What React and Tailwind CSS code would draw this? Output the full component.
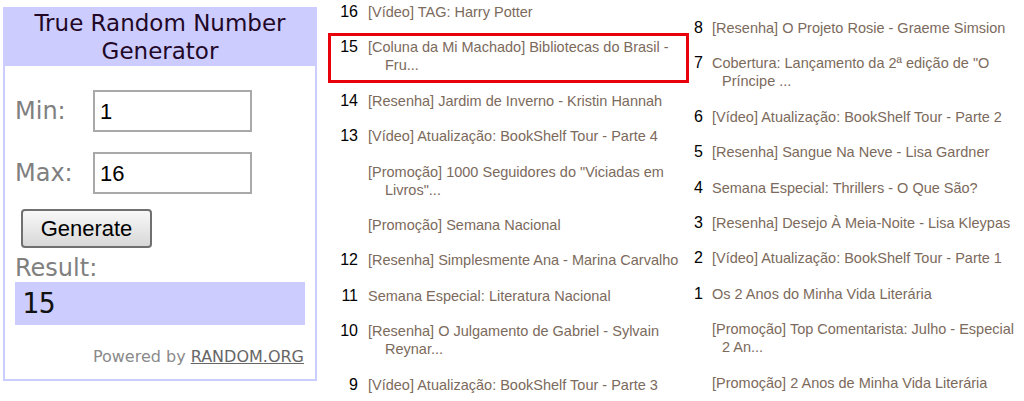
import React from "react";

const left = [
  { n: "16", lines: ["[Vídeo] TAG: Harry Potter"] },
  { n: "15", lines: ["[Coluna da Mi Machado] Bibliotecas do Brasil -", "Fru..."], boxed: true },
  { n: "14", lines: ["[Resenha] Jardim de Inverno - Kristin Hannah"] },
  { n: "13", lines: ["[Vídeo] Atualização: BookShelf Tour - Parte 4"] },
  { n: "", lines: ["[Promoção] 1000 Seguidores do \"Viciadas em", "Livros\"..."] },
  { n: "", lines: ["[Promoção] Semana Nacional"] },
  { n: "12", lines: ["[Resenha] Simplesmente Ana - Marina Carvalho"] },
  { n: "11", lines: ["Semana Especial: Literatura Nacional"] },
  { n: "10", lines: ["[Resenha] O Julgamento de Gabriel - Sylvain", "Reynar..."] },
  { n: "9", lines: ["[Vídeo] Atualização: BookShelf Tour - Parte 3"] },
];

const right = [
  { n: "8", lines: ["[Resenha] O Projeto Rosie - Graeme Simsion"] },
  { n: "7", lines: ["Cobertura: Lançamento da 2ª edição de \"O", "Príncipe ..."] },
  { n: "6", lines: ["[Vídeo] Atualização: BookShelf Tour - Parte 2"] },
  { n: "5", lines: ["[Resenha] Sangue Na Neve - Lisa Gardner"] },
  { n: "4", lines: ["Semana Especial: Thrillers - O Que São?"] },
  { n: "3", lines: ["[Resenha] Desejo À Meia-Noite - Lisa Kleypas"] },
  { n: "2", lines: ["[Vídeo] Atualização: BookShelf Tour - Parte 1"] },
  { n: "1", lines: ["Os 2 Anos do Minha Vida Literária"] },
  { n: "", lines: ["[Promoção] Top Comentarista: Julho - Especial", "2 An..."] },
  { n: "", lines: ["[Promoção] 2 Anos de Minha Vida Literária"] },
];

function Item({ item, numW, gap, indent }) {
  return (
    <div className="relative flex items-start">
      {item.boxed && (
        <span className="absolute -top-[5px] -bottom-[9px] left-0 right-[1px] border-[3px] border-[#e8000b]"></span>
      )}
      <span
        className="shrink-0 text-right text-[16px] leading-[18px] text-black"
        style={{ width: numW, marginRight: gap }}
      >
        {item.n}
      </span>
      <div className="whitespace-nowrap text-[14.5px] leading-[18px] text-[#7c6a5c]">
        {item.lines.map((l, i) => (
          <div key={i} style={{ paddingLeft: i > 0 ? indent : 0 }}>
            {l}
          </div>
        ))}
      </div>
    </div>
  );
}

function Widget() {
  return (
    <div
      className="mt-[7px] ml-[3px] w-[314px] h-[374px] shrink-0 border-2 border-[#ccccff] flex flex-col"
      style={{ fontFamily: '"DejaVu Sans", Verdana, sans-serif' }}
    >
      <div className="h-[57px] bg-[#ccccff] text-center text-[23px] leading-[28px] text-[#220826]">
        True Random Number
        <br />
        Generator
      </div>
      <div className="pl-[10px] flex flex-col">
        <div className="mt-[24px] flex items-center">
          <span className="w-[78px] text-[24px] text-[#808080]">Min:</span>
          <div className="w-[159px] h-[42px] border-2 border-[#a9a9a9] pl-[5px] flex items-center text-[22px] text-black" style={{ fontFamily: '"Liberation Sans", Arial, sans-serif' }}>
            1
          </div>
        </div>
        <div className="mt-[20px] flex items-center">
          <span className="w-[78px] text-[24px] text-[#808080]">Max:</span>
          <div className="w-[159px] h-[42px] border-2 border-[#a9a9a9] pl-[5px] flex items-center text-[22px] text-black" style={{ fontFamily: '"Liberation Sans", Arial, sans-serif' }}>
            16
          </div>
        </div>
        <button
          className="mt-[15px] ml-[6px] w-[131px] h-[39px] rounded-[4px] border-2 border-[#707070] bg-gradient-to-b from-[#f8f8f8] to-[#d8d8d8] text-[22px] text-black"
          style={{ fontFamily: '"Liberation Sans", Arial, sans-serif' }}
        >
          Generate
        </button>
        <div className="mt-[7px] text-[24px] leading-[26px] text-[#808080]">Result:</div>
        <div
          className="mt-[1px] w-[290px] h-[43px] bg-[#ccccff] pl-[7px] flex items-center text-[28px] text-[#111]"
          style={{ fontFamily: '"DejaVu Sans Mono", monospace' }}
        >
          15
        </div>
        <div className="mt-[22px] w-[289px] text-right text-[16px] leading-[20px] text-[#8a8a8a]">
          Powered by{" "}
          <span className="text-[#666] underline">RANDOM.ORG</span>
        </div>
      </div>
    </div>
  );
}

export default function App() {
  return (
    <div className="w-[1024px] h-[401px] bg-white flex overflow-hidden" style={{ fontFamily: '"Liberation Sans", Arial, sans-serif' }}>
      <Widget />
      <div className="ml-[11px] w-[362px] shrink-0 pt-[3px] flex flex-col gap-[17.4px] overflow-hidden">
        {left.map((it, i) => (
          <Item key={i} item={it} numW={30} gap={10} indent={17} />
        ))}
      </div>
      <div className="w-[334px] shrink-0 bg-white pt-[19px] flex flex-col gap-[17.4px]">
        {right.map((it, i) => (
          <Item key={i} item={it} numW={13} gap={9} indent={10} />
        ))}
      </div>
    </div>
  );
}
